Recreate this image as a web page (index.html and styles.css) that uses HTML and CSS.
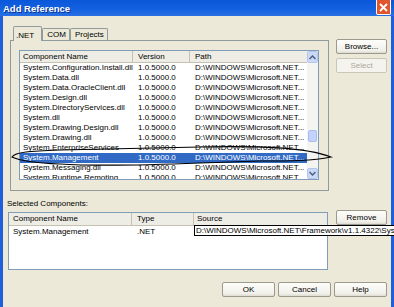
FILE: index.html
```html
<!DOCTYPE html>
<html>
<head>
<meta charset="utf-8">
<title>Add Reference</title>
<link rel="stylesheet" href="styles.css">
</head>
<body>
<div class="window">
  <div class="titlebar">
    <span class="title">Add Reference</span>
    <span class="close"><svg width="9" height="9" viewBox="0 0 9 9"><path d="M1 1L8 8M8 1L1 8" stroke="#fff" stroke-width="1.8" fill="none"/></svg></span>
  </div>
  <div class="client">
    <div class="top">
      <div class="tabarea">
        <div class="tabs">
          <div class="tab active">.NET</div>
          <div class="tab">COM</div>
          <div class="tab">Projects</div>
        </div>
        <div class="panel">
          <div class="listview main">
            <div class="lv-body">
              <div class="lv-header">
                <div class="c1">Component Name</div>
                <div class="c2">Version</div>
                <div class="c3">Path</div>
              </div>
              <div class="row"><div class="c1">System.Configuration.Install.dll</div><div class="c2">1.0.5000.0</div><div class="c3">D:\WINDOWS\Microsoft.NET...</div></div>
              <div class="row"><div class="c1">System.Data.dll</div><div class="c2">1.0.5000.0</div><div class="c3">D:\WINDOWS\Microsoft.NET...</div></div>
              <div class="row"><div class="c1">System.Data.OracleClient.dll</div><div class="c2">1.0.5000.0</div><div class="c3">D:\WINDOWS\Microsoft.NET...</div></div>
              <div class="row"><div class="c1">System.Design.dll</div><div class="c2">1.0.5000.0</div><div class="c3">D:\WINDOWS\Microsoft.NET...</div></div>
              <div class="row"><div class="c1">System.DirectoryServices.dll</div><div class="c2">1.0.5000.0</div><div class="c3">D:\WINDOWS\Microsoft.NET...</div></div>
              <div class="row"><div class="c1">System.dll</div><div class="c2">1.0.5000.0</div><div class="c3">D:\WINDOWS\Microsoft.NET...</div></div>
              <div class="row"><div class="c1">System.Drawing.Design.dll</div><div class="c2">1.0.5000.0</div><div class="c3">D:\WINDOWS\Microsoft.NET...</div></div>
              <div class="row"><div class="c1">System.Drawing.dll</div><div class="c2">1.0.5000.0</div><div class="c3">D:\WINDOWS\Microsoft.NET...</div></div>
              <div class="row"><div class="c1">System.EnterpriseServices</div><div class="c2">1.0.5000.0</div><div class="c3">D:\WINDOWS\Microsoft.NET...</div></div>
              <div class="row selected"><div class="c1">System.Management</div><div class="c2">1.0.5000.0</div><div class="c3">D:\WINDOWS\Microsoft.NET...</div></div>
              <div class="row"><div class="c1">System.Messaging.dll</div><div class="c2">1.0.5000.0</div><div class="c3">D:\WINDOWS\Microsoft.NET...</div></div>
              <div class="row"><div class="c1">System.Runtime.Remoting</div><div class="c2">1.0.5000.0</div><div class="c3">D:\WINDOWS\Microsoft.NET...</div></div>
            </div>
            <div class="scrollbar">
              <div class="sb-btn"><svg width="7" height="5" viewBox="0 0 7 5"><path d="M0.5 4L3.5 1L6.5 4" stroke="#4D6185" stroke-width="1.5" fill="none"/></svg></div>
              <div class="sb-track"><div class="sb-thumb"></div></div>
              <div class="sb-btn"><svg width="7" height="5" viewBox="0 0 7 5"><path d="M0.5 1L3.5 4L6.5 1" stroke="#4D6185" stroke-width="1.5" fill="none"/></svg></div>
            </div>
          </div>
        </div>
      </div>
      <div class="sidebtns">
        <div class="btn">Browse...</div>
        <div class="btn disabled">Select</div>
      </div>
    </div>
    <div class="label">Selected Components:</div>
    <div class="bottom">
      <div class="listview sel">
        <div class="lv-body">
          <div class="lv-header">
            <div class="s1">Component Name</div>
            <div class="s2">Type</div>
            <div class="s3">Source</div>
          </div>
          <div class="row">
            <div class="s1">System.Management</div>
            <div class="s2">.NET</div>
            <div class="s3"><div class="editbox">D:\WINDOWS\Microsoft.NET\Framework\v1.1.4322\System.Management.dll</div></div>
          </div>
        </div>
      </div>
      <div class="btn remove">Remove</div>
    </div>
    <div class="footer">
      <div class="btn">OK</div>
      <div class="btn">Cancel</div>
      <div class="btn">Help</div>
    </div>
  </div>
  <svg class="annotation" width="394" height="307" viewBox="0 0 394 307">
    <path d="M12 157 C15 152 30 151 60 150 L200 147 C260 146 305 147 331 157 C312 161 290 161 260 161 L200 163 C150 165 90 166 60 164 C35 163 20 161 12 157 Z" stroke="#000" stroke-width="1.2" fill="none"/>
  </svg>
</div>
</body>
</html>
```

FILE: styles.css
```css
* { box-sizing: border-box; margin: 0; padding: 0; }
html, body { width: 394px; height: 307px; overflow: hidden; }
body {
  font-family: "Liberation Sans", Arial, sans-serif;
  font-size: 8px;
  color: #000;
  background: #ECE9D8;
}
.window {
  position: relative;
  width: 394px;
  height: 307px;
  background: #1F5FDB;
  display: flex;
  flex-direction: column;
}
.titlebar {
  height: 16px;
  flex: none;
  display: flex;
  align-items: center;
  justify-content: space-between;
  padding: 0 3px 0 3px;
  background: linear-gradient(#0A58DA, #1462E0 60%, #2A70E4);
}
.title {
  color: #fff;
  font-weight: bold;
  font-size: 9.5px;
  text-shadow: 1px 1px 0 #0A2F8C;
}
.close {
  width: 15px;
  height: 15px;
  align-self: flex-start;
  background: #E1562D;
  border: 1px solid #fff;
  border-top: none;
  border-radius: 0 0 2px 2px;
  display: flex;
  align-items: center;
  justify-content: center;
}
.client {
  flex: 1;
  margin: 0 3px;
  background: #ECE9D8;
  padding-top: 10px;
  display: flex;
  flex-direction: column;
}
.top { display: flex; }
.tabarea { margin-left: 7px; width: 319px; }
.tabs {
  display: flex;
  align-items: flex-end;
  height: 14px;
  padding-left: 3px;
  position: relative;
  z-index: 1;
}
.tab {
  height: 12px;
  border: 1px solid #919B9C;
  border-bottom: none;
  border-radius: 2px 2px 0 0;
  padding: 0 3px 0 4px;
  line-height: 11px;
  background: #ECE9D8;
}
.tab.active {
  height: 15px;
  margin-bottom: -1px;
  padding: 3px 7px 0 2px;
}
.panel {
  border: 1px solid #919B9C;
  padding: 9px 9px 10px 8px;
  height: 151px;
}
.listview {
  background: #fff;
  border: 1px solid #7F9DB9;
  display: flex;
  overflow: hidden;
}
.listview.main { width: 300px; height: 130px; }
.lv-body { flex: 1; min-width: 0; }
.lv-header {
  display: flex;
  height: 12px;
  line-height: 11px;
  background: #EEEDE5;
  border-bottom: 1px solid #C5C2B2;
}
.lv-header > div { border-right: 1px solid #C5C2B2; }
.row { display: flex; height: 10px; line-height: 10px; white-space: nowrap; }
.row.selected { background: #316AC5; color: #fff; }
.c1 { width: 113px; padding-left: 3px; flex: none; overflow: hidden; }
.c2 { width: 57px; padding-left: 5px; flex: none; }
.c3 { flex: 1; padding-left: 5px; }
.lv-header .c3 { border-right: none; }
.scrollbar {
  width: 11px;
  flex: none;
  display: flex;
  flex-direction: column;
  background: #F4F4F0;
}
.sb-btn {
  height: 12px;
  background: #CBD8F6;
  border: 1px solid #B4C6EE;
  border-radius: 2px;
  display: flex;
  align-items: center;
  justify-content: center;
}
.sb-btn:last-child { height: 11px; }
.sb-track { flex: 1; padding: 67px 1px 0 1px; }
.sb-thumb {
  height: 12px;
  background: #C3D3FB;
  border: 1px solid #A7BDEF;
  border-radius: 2px;
}
.sidebtns {
  margin-left: 7px;
  margin-top: 13px;
  display: flex;
  flex-direction: column;
  gap: 4px;
}
.btn {
  width: 51px;
  height: 15px;
  line-height: 13px;
  text-align: center;
  background: linear-gradient(#FDFDFB, #F1F0EA 80%, #DEDBCF);
  border: 1px solid #9C9A8E;
  border-radius: 2px;
}
.btn.disabled { color: #ACA899; border-color: #C9C7BA; background: #F4F3EE; }
.label { margin: 8px 0 0 4px; line-height: 10px; }
.bottom { display: flex; margin-top: 1px; align-items: flex-start; }
.listview.sel {
  margin: 2px 0 0 5px;
  width: 320px;
  height: 58px;
  overflow: visible;
  position: relative;
  z-index: 1;
}
.sel .lv-header { height: 13px; line-height: 12px; }
.sel .row { height: 11px; line-height: 11px; }
.s1 { width: 123px; padding-left: 4px; flex: none; }
.s2 { width: 62px; padding-left: 5px; flex: none; }
.s3 { flex: 1; padding-left: 3px; position: relative; }
.lv-header .s3 { border-right: none; }
.editbox {
  position: absolute;
  left: 0;
  top: -1px;
  width: 210px;
  height: 11px;
  line-height: 9px;
  background: #fff;
  border: 1px solid #000;
  padding-left: 1px;
  white-space: nowrap;
  overflow: hidden;
  color: #000;
}
.btn.remove { margin-left: 8px; }
.footer {
  display: flex;
  justify-content: flex-end;
  gap: 3px;
  padding-right: 4px;
  margin-top: 12px;
}
.footer .btn { width: 53px; }
.annotation { position: absolute; left: 0; top: 0; pointer-events: none; z-index: 5; }
```
